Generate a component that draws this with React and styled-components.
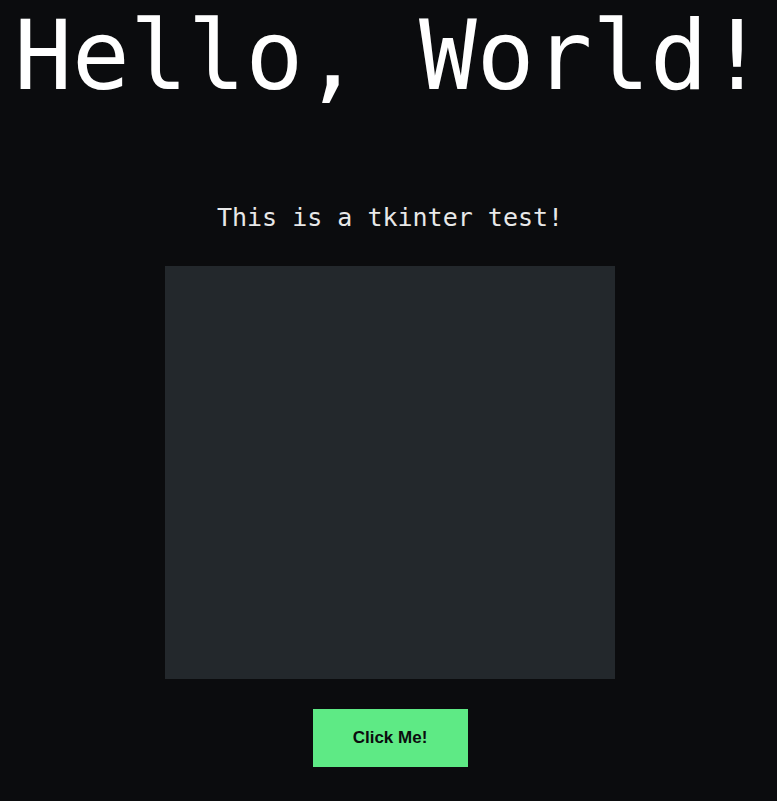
import React from 'react';
import styled, { createGlobalStyle } from 'styled-components';

const GlobalStyle = createGlobalStyle`
  html, body {
    margin: 0;
    padding: 0;
    background: #0b0c0e;
  }
`;

const Window = styled.div`
  display: flex;
  flex-direction: column;
  align-items: center;
  width: 777px;
  height: 801px;
  padding: 8px 0 0 3px;
  box-sizing: border-box;
  background: #0b0c0e;
  overflow: hidden;
`;

const Title = styled.h1`
  margin: 0;
  font-family: 'DejaVu Sans Mono', monospace;
  font-weight: normal;
  font-size: 96px;
  line-height: 96px;
  color: #ffffff;
  white-space: nowrap;
`;

const Subtitle = styled.p`
  margin: 101px 0 0;
  font-family: 'DejaVu Sans Mono', monospace;
  font-size: 25px;
  line-height: 25px;
  color: #e8e8e8;
`;

const Canvas = styled.div`
  margin-top: 36px;
  width: 450px;
  height: 413px;
  background: #23282c;
`;

const Button = styled.button`
  margin-top: 30px;
  width: 155px;
  height: 58px;
  border: none;
  background: #5eea85;
  color: #0b0c0e;
  font-family: 'Liberation Sans', Arial, sans-serif;
  font-weight: bold;
  font-size: 17px;
  cursor: pointer;
`;

const App = () => {
  return (
    <>
      <GlobalStyle />
      <Window>
        <Title>Hello, World!</Title>
        <Subtitle>This is a tkinter test!</Subtitle>
        <Canvas />
        <Button>Click Me!</Button>
      </Window>
    </>
  );
};

export default App;
